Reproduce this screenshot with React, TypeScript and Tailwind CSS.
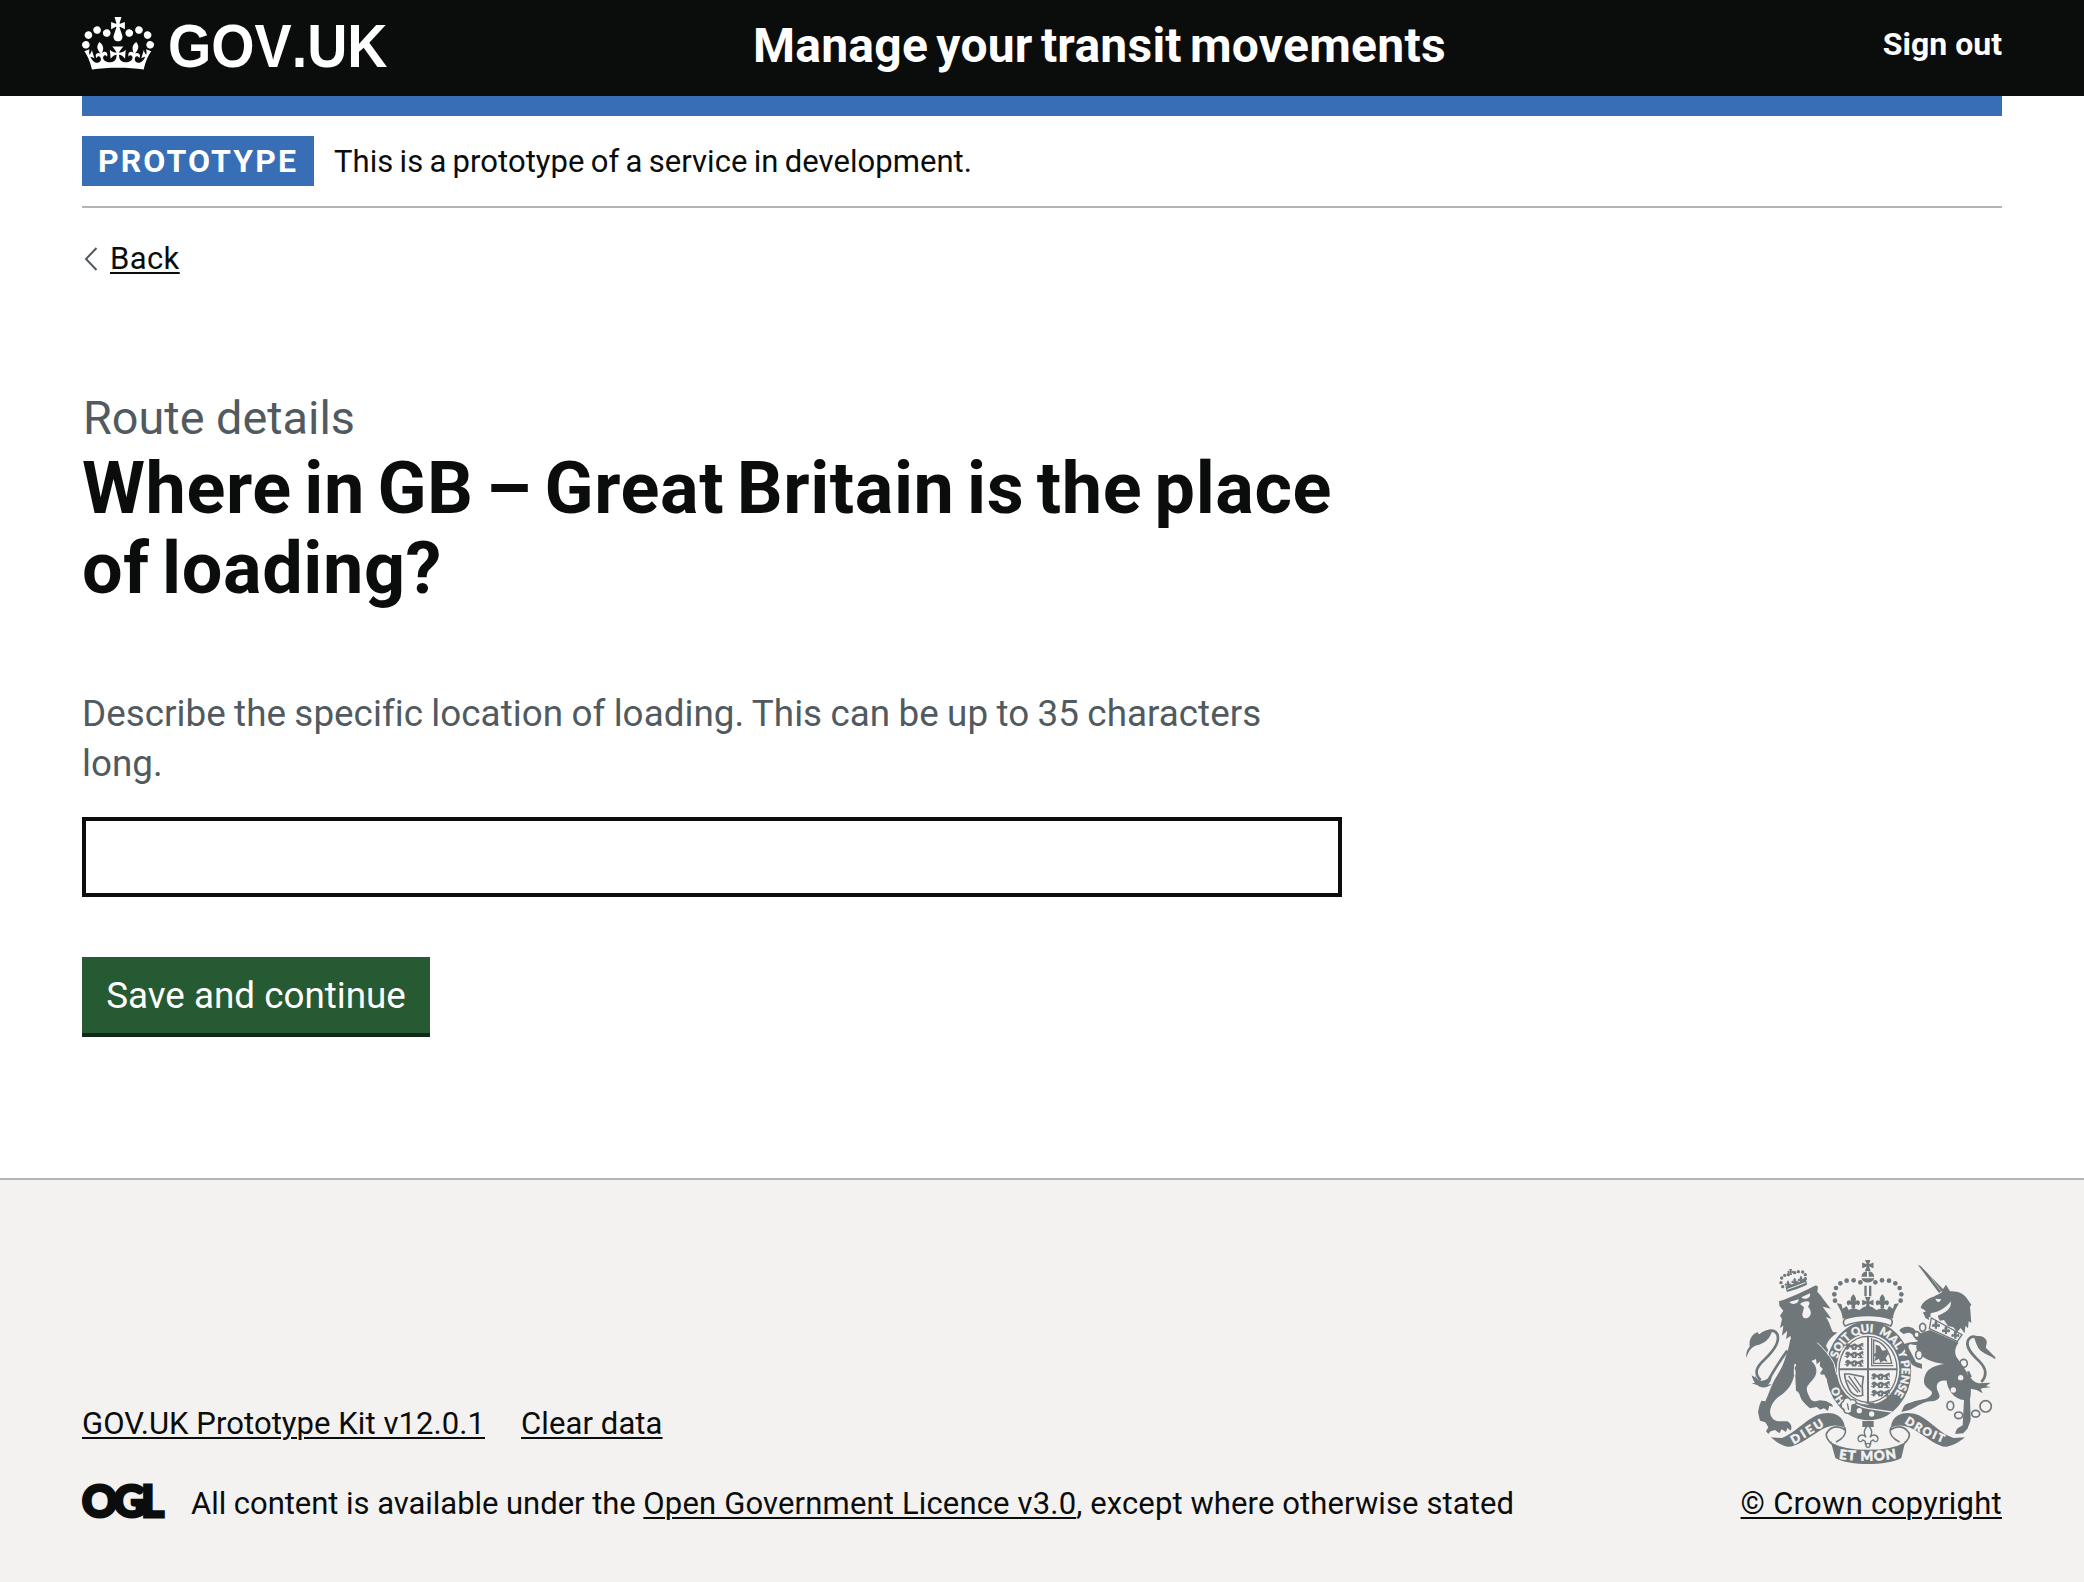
import React from "react";

const INK = "#6f777b";
const PAPER = "#f3f2f1";

function Crown() {
  return (
    <svg viewBox="0 0 132 97" className="h-[53px] w-[72px] shrink-0" fill="currentColor" aria-hidden="true">
      <path d="M25 30.2c3.5 1.5 7.7-.2 9.1-3.7 1.5-3.6-.2-7.8-3.9-9.2-3.6-1.4-7.6.3-9.1 3.9-1.4 3.5.3 7.5 3.9 9zM9 39.5c3.6 1.5 7.8-.2 9.2-3.7 1.5-3.6-.2-7.8-3.9-9.1-3.6-1.5-7.6.2-9.1 3.8-1.4 3.5.3 7.5 3.8 9zM4.4 57.2c3.5 1.5 7.7-.2 9.1-3.8 1.5-3.6-.2-7.7-3.9-9.1-3.5-1.5-7.6.3-9.1 3.8-1.4 3.5.3 7.6 3.9 9.1zm38.3-21.4c3.5 1.5 7.7-.2 9.1-3.8 1.5-3.6-.2-7.7-3.9-9.1-3.6-1.5-7.6.3-9.1 3.8-1.3 3.6.4 7.7 3.9 9.1zm64.4-5.6c-3.6 1.5-7.8-.2-9.1-3.7-1.5-3.6.2-7.8 3.8-9.2 3.6-1.4 7.7.3 9.2 3.9 1.3 3.5-.4 7.5-3.9 9zm15.9 9.3c-3.6 1.5-7.7-.2-9.1-3.7-1.5-3.6.2-7.8 3.7-9.1 3.6-1.5 7.7.2 9.2 3.8 1.5 3.5-.3 7.5-3.8 9zm4.7 17.7c-3.6 1.5-7.8-.2-9.2-3.8-1.5-3.6.2-7.7 3.9-9.1 3.6-1.5 7.7.3 9.2 3.8 1.3 3.5-.4 7.6-3.9 9.1zM89.3 35.8c-3.6 1.5-7.8-.2-9.2-3.8-1.4-3.6.2-7.7 3.9-9.1 3.6-1.5 7.7.3 9.2 3.8 1.4 3.6-.3 7.7-3.9 9.1zM69.7 17.7l8.9 4.7V9.3l-8.9 2.8c-.2-.3-.5-.6-.9-.9L72.4 0H59.6l3.5 11.2c-.3.3-.6.5-.9.9l-8.8-2.8v13.1l8.8-4.7c.3.3.6.7.9.9l-5 15.4v.1c-.2.8-.4 1.6-.4 2.4 0 4.1 3.1 7.5 7 8.1h.2c.3 0 .7.1 1 .1.4 0 .7 0 1-.1h.2c4-.6 7.1-4.1 7.1-8.1 0-.8-.1-1.7-.4-2.4V34l-5.1-15.4c.4-.2.7-.6 1-.9zM66 92.8c16.9 0 32.8 1.1 47.1 3.2 4-16.9 8.9-26.7 14-33.5l-9.6-3.4c1 4.9 1.1 7.2 0 10.2-1.5-1.4-3-4.3-4.2-8.7L108.6 76c2.8-2 5-3.2 7.5-3.3-4.4 9.4-10 11.9-13.6 11.2-4.3-.8-6.3-4.6-5.6-7.9 1-4.7 5.7-5.9 8-.5 4.3-8.7-3-11.4-7.6-8.8 7.1-7.2 7.9-13.5 2.1-21.1-8 6.1-8.1 12.3-4.5 20.8-4.7-5.4-12.1-2.5-9.5 6.2 3.4-5.2 7.9-2 7.2 3.1-.6 4.3-6.4 7.8-13.5 7.2-10.3-.9-10.9-8-11.2-13.8 2.5-.5 7.1 1.8 11 7.3L80.2 60c-4.1 4.4-8 5.3-12.3 5.4 1.4-4.4 8-11.6 8-11.6H55.5s6.4 7.2 7.9 11.6c-4.2-.1-8-1-12.3-5.4l1.4 16.4c3.9-5.5 8.5-7.7 10.9-7.3-.3 5.8-.9 12.8-11.1 13.8-7.2.6-12.9-2.9-13.5-7.2-.7-5 3.8-8.3 7.1-3.1 2.7-8.7-4.6-11.6-9.4-6.2 3.7-8.5 3.6-14.7-4.6-20.8-5.8 7.6-5 13.9 2.2 21.1-4.7-2.6-11.9.1-7.7 8.8 2.3-5.5 7.1-4.2 8.1.5.7 3.3-1.3 7.1-5.7 7.9-3.5.7-9-1.8-13.5-11.2 2.5.1 4.7 1.3 7.5 3.3l-4.7-15.4c-1.2 4.4-2.7 7.2-4.3 8.7-1.1-3-.9-5.3 0-10.2l-9.5 3.4c5 6.9 9.9 16.7 14 33.5 14.8-2.1 30.8-3.2 47.7-3.2z" />
    </svg>
  );
}

function CrossPattee({ x, y, s }: { x: number; y: number; s: number }) {
  return (
    <path
      transform={`translate(${x} ${y}) scale(${s})`}
      d="M-5-10H5L2-2 10-5V5L2 2 5 10H-5L-2 2-10 5V-5L-2-2Z"
    />
  );
}

function Fleur({ x, y, s }: { x: number; y: number; s: number }) {
  return (
    <path
      transform={`translate(${x} ${y}) scale(${s})`}
      d="M0-12C5-7 6-3 2 2 5-3 10-3 11 2 11 7 7 8 6 5L3 6V11H-3V6L-6 5C-7 8-11 7-11 2-10-3-5-3-2 2-6-3-5-7 0-12Z"
    />
  );
}

const CROWN_PEARLS: [number, number][] = [
  [405, 182], [403, 163], [408, 144], [421, 130], [440, 122], [461, 121], [481, 127],
];

/* Three passant lions, shown as rows of broken wavy strokes. */
function LionRows({ x, y }: { x: number; y: number }) {
  return (
    <g transform={`translate(${x} ${y})`} fill="none" stroke={INK} strokeWidth="7" strokeLinecap="round">
      {[0, 25, 50].map((dy) => (
        <g key={dy} transform={`translate(0 ${dy})`}>
          <path d="M4 4q5-6 9 0t10 1 10-1 10 1 9-5M10 5l-3 9M20 6l4 8M34 5l-3 9M44 5l4 9" />
          <path strokeWidth="3" d="M0 12h12M22 15h10M40 16h14M52 0l2 8" />
        </g>
      ))}
    </g>
  );
}

function RoyalArms({ className }: { className: string }) {
  return (
    <svg viewBox="138 60 750 612" className={className} fill={INK} role="img" aria-label="Royal coat of arms">
      {/* crown above the shield */}
      <CrossPattee x={503.5} y={76} s={1.7} />
      <path d="M484 110a19 19 0 0 1 17-16v16zM506 94a19 19 0 0 1 17 16h-17zM484 115h39a20 16 0 0 1-39 0z" />
      <path d="M493 137h7v32h-7zM507 137h7v32h-7z" />
      {CROWN_PEARLS.map(([x, y]) => (
        <g key={x}>
          <circle cx={x} cy={y} r="7" />
          <circle cx={1007 - x} cy={y} r="7" />
        </g>
      ))}
      <Fleur x={460} y={184} s={1.8} />
      <Fleur x={547} y={184} s={1.8} />
      <CrossPattee x={503.5} y={188} s={1.7} />
      <path d="M410 190l14 2 4 14 12-8 6 12 14-6 18 6 14-10h23l14 10 18-6 14 6 6-12 12 8 4-14 14-2c-8 14-16 26-18 46-40-10-111-10-151 0-2-20-10-32-18-46z" />

      {/* lion tail and body */}
      <path d="M262 332c-24 32-42 62-58 90M182 420c-20-18-14-38 8-58 30-28 44-50 44-68 0-18-14-26-30-20" fill="none" stroke={INK} strokeWidth="8" />
      <path d="M216 270c-2 26-26 42-46 46-14 4-24 16-31 38-2-18 4-28 10-34-4-24 12-42 26-44-2 4 0 6 4 6 10-8 22-14 37-12zM165 408c6 12 18 18 30 12l20-10c-2 14-6 20-12 24l12-2c-10 12-34 14-42 4l-18-6 10-2c-6-8-8-14-10-22l10 6z" />
      <path d="M237 184c40-12 78-32 111-48l6 4-2 15c14 14 24 32 40 51l-24-6c10 14 20 26 26 37l-16-6c10 14 14 32 20 44l14 3c-18 12-28 24-34 40 8 16 18 32 28 49 6 14 7 26 5 36l-11-6 3 20-13-12-6 14-10-16-12 2 10-16-12-10 2-16-12 10-2-16-14 6c12 10 18 24 14 38-4 16-20 26-27 40-3 10 4 24 12 38 8 6 18 5 27 2l18 2 18 10 3 8-11-4-4 16-12-8-12 4-10-8-20 4c-12-10-28-26-30-38-2-10-8-13-12-15l-3-60c-5 35-17 55-40 72-20 13-33 28-35 53 2 15 10 25 25 27h27c12 6 15 18 10 28l-10-8-4 12-13-8-7 12-13-10-13 4-7 8-7-8 7-12-9-15-16-5-6-25 4-20 6-15 12 2c10-22 16-42 26-62 13-20 28-45 36-75 10-25 12-45 14-60l-14 10 4-25-16 15 4-30-10 7 6-27-6-10 10-15-12-15z" />
      <path d="M268 186l28-8c2 12-18 20-28 8zM304 172l26-12c4 14-14 22-26 12zM300 192c10-8 20-10 28-6 2 6-2 10-4 14 10 10 12 24 2 32-12 8-22-2-18-14l4-16z" fill={PAPER} />
      <path d="M258 308l14-14M286 372c-2 10-2 20-2 32" fill="none" stroke={PAPER} strokeWidth="5" />
      <path d="M300 372c22-6 34 4 34 4s-4 24-34 62c-8-20-10-46-16-52 0-8 8-12 16-14z" />
      {/* lion crown */}
      <path d="M256 140l62-22 3 16c-20 10-40 16-60 22z" />
      {[[248, 140], [243, 128], [245, 114], [254, 106], [316, 116], [316, 104], [308, 96], [295, 95], [284, 98], [265, 104]].map(([x, y]) => (
        <circle key={`${x}-${y}`} cx={x} cy={y} r="5" />
      ))}
      <CrossPattee x={272} y={96} s={0.9} />
      <Fleur x={264} y={132} s={0.9} />
      <Fleur x={284} y={124} s={0.9} />
      <Fleur x={303} y={118} s={0.9} />
      <path d="M262 148l54-20" stroke={PAPER} strokeWidth="3" />
      <path d="M254 164c34-8 66-22 96-36" fill="none" stroke={PAPER} strokeWidth="4" />

      {/* garter and shield */}
      <ellipse cx="506" cy="392" rx="130" ry="151" fill={INK} stroke={PAPER} strokeWidth="5" />
      <ellipse cx="504" cy="388" rx="94" ry="106" fill={PAPER} />
      <ellipse cx="504" cy="388" rx="87" ry="99" fill="none" stroke={INK} strokeWidth="4" />
      <path d="M436 236c40-13 95-13 135 0 8 6 7 14 1 22-40-18-98-18-137 0-7-8-6-16 1-22z" fill={PAPER} stroke={INK} strokeWidth="5" />
      <path d="M501 288h6v200h-6zM416 385h176v6H416z" />
      <LionRows x={435} y={312} />
      <LionRows x={514} y={402} />
      <path d="M515 294v83h65M521 300c26 6 46 28 54 70h-54z" fill="none" stroke={INK} strokeWidth="4" />
      <path d="M527 314l12 4 8 14 12-2 6 12-8 12 6 12-12-4-10 6-4-12-14 8 4-14-8-4 8-8z" />
      <path d="M434 402h14l42 8c-4 20-4 38-2 56-16 6-34-2-42-22-6-14-12-26-12-42z" fill="none" stroke={INK} strokeWidth="5" />
      <path d="M446 408l34 48M442 420l32 38M462 410l22 32" stroke={INK} strokeWidth="4" />
      <defs>
        <path id="garter-left" d="M413 356A98 113 0 0 1 532 281" />
        <path id="garter-right" d="M536 282A98 113 0 0 1 560 485" />
        <path id="garter-low" d="M438 482A98 113 0 0 1 408 400" />
        <path id="scroll-left" d="M282 613Q322 590 386 549" />
        <path id="scroll-mid" d="M416 656Q504 670 594 654" />
        <path id="scroll-right" d="M613 549Q664 584 738 612" />
      </defs>
      <g fill={PAPER} stroke={PAPER} strokeWidth="1" fontFamily="Lato, 'Liberation Sans', sans-serif" fontWeight="900">
        <g fontSize="34">
          <text textLength="144" lengthAdjust="spacing"><textPath href="#garter-left">SOIT QUI</textPath></text>
          <text textLength="214" lengthAdjust="spacing"><textPath href="#garter-right">MAL Y PENSE</textPath></text>
          <text fontSize="32"><textPath href="#garter-low">HO</textPath></text>
        </g>
      </g>
      {/* lion forepaw over the garter */}
      <path d="M350 308c16 14 34 34 46 54 10 16 14 28 14 44l-9-8-2 18-12-12-8 12-8-16-12 2 10-16-10-10 2-14z" />
      <path d="M352 308c18 18 38 38 50 62l8 34" fill="none" stroke={PAPER} strokeWidth="3" />
      {/* buckle and strap */}
      <path d="M442 478c24 30 74 40 128 34l-8 14c-44 20-92 12-122-16z" />
      <path d="M494 488h28l10 12-20-4z" />
      <path d="M458 486c20 14 40 20 64 22l54 8" fill="none" stroke={PAPER} strokeWidth="4" />
      <path d="M430 484c2-12 18-14 22-4 10-4 20 4 16 12l-12 4-2 20c-8 8-24 4-22-8-8-2-14-18-2-24z" fill={PAPER} stroke={INK} strokeWidth="4" />
      <path d="M442 490l4 20" stroke={INK} strokeWidth="4" />
      <circle cx="478" cy="512" r="8" fill={PAPER} />
      <circle cx="515" cy="522" r="8" fill={PAPER} />

      {/* unicorn */}
      <path d="M654 75l7 2 70 72-14 10z" />
      <path d="M668 76l54 76" stroke={PAPER} strokeWidth="1.5" />
      <path d="M724 158c2-8 10-18 14-24l12 20c24-2 44 8 54 26l10 14-4 6c2 16 2 28 4 48l-8-4-2 20-8-6-2 22-12-16-10 12-12-14-16-4-12-18-12 2c-8-10-8-20 0-28-8 4-20 6-28 8l4 8-10 2 2 8-12-6c-2-10-6-14-8-16l10-4-8-6-8-4c4-18 20-28 38-34z" />
      <path d="M706 176l18 2-6 8c-6 0-10-4-12-10zM752 184c4 20-14 34-36 42l-14 8c-2 8-2 16 2 24l-14-10 2-28c26-4 48-18 60-36z" fill={PAPER} />
      <path d="M694 234l-6 32 84 38 14-20z" fill={PAPER} stroke={INK} strokeWidth="4" />
      <Fleur x={708} y={254} s={1.1} />
      <Fleur x={738} y={270} s={1.1} />
      <Fleur x={766} y={284} s={1.1} />
      <path d="M690 270l86 38c-10 12-14 28-6 44 14 20 30 40 38 62 6 20 6 46 2 64l2 60c-2 14-8 20-8 26l-14 16-24 2c0-8 4-14 8-18l14-8 4-76c-28-2-50-30-52-58-24-4-34 10-28 28l6 14c4 12-10 20-28 20-26 2-46 22-62 26l-24 6 8-18c10-10 20-8 30-14 18-6 40-4 52-20 8-10-10-16-14-22-10-10-10-24-4-38 8-20 32-28 56-32-34-4-66-14-82-44-4-12 6-28 4-46z" />
      <path d="M678 298l-30 2c-6-14-14-22-24-22l-14 4-12-10c8-14 28-14 44-6l12 16 20 6M674 318l-36-4c-10-2-14-2-12 10l22 42 18 6v14l-16-4-14-8c-10-20-22-40-26-60 10-8 50-12 70-6z" />
      <circle cx="782" cy="413" r="8" fill={PAPER} />
      <circle cx="760" cy="450" r="8" fill={PAPER} />
      <g fill={PAPER} stroke={INK} strokeWidth="5">
        <ellipse cx="668" cy="262" rx="9" ry="12" />
        <ellipse cx="650" cy="284" rx="8" ry="9" />
        <ellipse cx="657" cy="344" rx="10" ry="13" />
      </g>
      <g fill="none" stroke={INK} strokeWidth="5">
        <ellipse cx="791" cy="370" rx="11" ry="12" />
        <ellipse cx="751" cy="497" rx="10" ry="13" />
        <ellipse cx="776" cy="526" rx="12" ry="10" />
        <ellipse cx="827" cy="521" rx="12" ry="10" />
        <circle cx="857" cy="499" r="17" />
      </g>
      {/* unicorn tail */}
      <path d="M812 412c-4-8-6-12-8-18M844 426c18-20 14-42-6-62-28-26-44-48-32-66 6-10 18-10 30-4" fill="none" stroke={INK} strokeWidth="8" />
      <path d="M822 292c14-8 32-4 38 10 2 10-4 16-2 22l28 28v6c-14-10-28-14-42-24-12-10-16-26-22-42zM804 400c8 18 20 28 32 30l36-2-14 10 14 4-22 2-8 2 6 14-18-10-18-4-10-22z" />

      {/* pendant fleur-de-lis */}
      <path d="M487 543h34v18h-34z" />
      <path d="M504 556c16 16 12 26 6 36 6-10 22-10 24 4 0 10-10 12-14 4l-8 4v8h-16v-8l-8-4c-4 8-14 6-14-4 2-14 18-14 24-4-6-10-10-20 6-36z" fill={PAPER} stroke={INK} strokeWidth="4" />
      <circle cx="504" cy="616" r="6" fill={PAPER} stroke={INK} strokeWidth="4" />

      {/* motto scrolls */}
      <path d="M212 592l34 2c40-16 66-50 104-68 34-14 72-8 82 24l3 14c-30-14-50-6-76 8-38 24-72 50-96 48-22-4-30-12-51-28z" />
      <path d="M795 592l-34 2c-40-12-66-48-104-68-34-14-72-8-82 24l-3 14c30-14 50-6 76 8 38 24 68 50 92 48 22-4 34-12 55-28z" />
      <path d="M434 562c8 18-6 34-26 44M380 580c10-20 34-26 56-10M380 578c-6 14 6 26 18 36M573 562c-8 18 6 34 26 44M627 580c-10-20-34-26-56-10M627 578c6 14-6 26-18 36" fill="none" stroke={INK} strokeWidth="5" />
      <path d="M392 604c50 30 172 30 224 0l-12 50c-44 24-156 24-198 0z" />
      <path d="M396 606c50 28 166 28 216 0" fill="none" stroke={PAPER} strokeWidth="5" />
      <g fill={PAPER} stroke={PAPER} strokeWidth="1.5" fontFamily="Lato, 'Liberation Sans', sans-serif" fontWeight="900">
        <text fontSize="36" textLength="108" lengthAdjust="spacing"><textPath href="#scroll-left">DIEU</textPath></text>
        <text fontSize="40" textLength="174" lengthAdjust="spacing"><textPath href="#scroll-mid">ET MON</textPath></text>
        <text fontSize="34" textLength="130" lengthAdjust="spacing"><textPath href="#scroll-right">DROIT</textPath></text>
      </g>
    </svg>
  );
}

const link = "underline decoration-2 underline-offset-[3px]";

export default function App() {
  return (
    <div className="flex h-[1582px] flex-col bg-white font-['Roboto',sans-serif] text-[#0b0c0c]">
      <header className="h-24 bg-[#0b0c0c] px-[82px] text-white">
        <div className="flex h-full">
          <a className="flex w-[671px] pt-[17px]">
            <Crown />
            <span className="mt-[-4px] ml-[14px] origin-left scale-x-[0.92] font-['Liberation_Sans',sans-serif] text-[60.5px] leading-[66px] font-bold [font-kerning:none]">
              GOV.UK
            </span>
          </a>
          <a className="flex-1 pt-[16px] text-[48px] leading-[60px] font-bold tracking-[0.25px] [word-spacing:-4px]">
            Manage your transit movements
          </a>
          <a className="pt-[24px] text-[32px] leading-[40px] font-bold">Sign out</a>
        </div>
      </header>

      <main className="mx-[82px] flex h-[1082px] flex-col">
        <div className="h-5 shrink-0 bg-[#386eb5]" />
        <div className="flex h-[92px] shrink-0 items-center border-b-2 border-[#b1b4b6]">
          <strong className="flex h-[50px] w-[232px] items-center bg-[#386eb5] pl-4 text-[32px] leading-[50px] font-bold tracking-[2.1px] text-white">
            PROTOTYPE
          </strong>
          <span className="ml-5 pt-[2px] text-[31px] leading-[48px] tracking-[0.05px] [word-spacing:-1.5px]">
            This is a prototype of a service in development.
          </span>
        </div>

        <a className="mt-[31px] flex h-10 shrink-0 items-center text-[31px] leading-10 tracking-[0.4px]">
          <svg viewBox="0 0 14 24" className="mr-[12px] ml-[2px] h-6 w-[14px]" fill="none" stroke="#505a5f" strokeWidth="2" aria-hidden="true">
            <path d="M12.5 1 2 12l10.5 11" />
          </svg>
          <span className={link}>Back</span>
        </a>

        <div className="w-[1260px] pt-[109px]">
          <h1>
            <span className="ml-px block text-[46.8px] leading-[60px] text-[#505a5f]">Route details</span>
            <span className="block pt-px text-[72px] leading-[80px] font-bold tracking-[0.6px] [word-spacing:-6px]">
              Where in GB – Great Britain is the place of loading?
            </span>
          </h1>
          <p className="mt-20 text-[36.8px] leading-[50px] tracking-[0.03px] text-[#505a5f] [word-spacing:-0.8px]">
            Describe the specific location of loading. This can be up to 35 characters long.
          </p>
          <input type="text" aria-label="Place of loading" className="mt-[28px] block h-20 w-full border-4 border-[#0b0c0c] bg-white" />
          <button className="mt-[60px] flex h-20 w-[348px] justify-center border-b-4 border-[#10291a] bg-[#265a33] pt-[14px] text-[36.8px] leading-[50px] text-white">
            Save and continue
          </button>
        </div>
      </main>

      <footer className="flex h-[404px] items-end justify-between border-t-2 border-[#b1b4b6] bg-[#f3f2f1] px-[82px] pb-[58px] text-[31px] leading-10">
        <div>
          <div className="flex gap-[36px]">
            <a className={`${link} tracking-[0.07px]`}>GOV.UK Prototype Kit v12.0.1</a>
            <a className={`${link} tracking-[0.1px]`}>Clear data</a>
          </div>
          <div className="mt-10 flex">
            <svg viewBox="0 0 82 34" className="mr-[27px] h-[34px] w-[82px] overflow-visible" fill="#0b0c0c" role="img" aria-label="OGL">
              <text x="0" y="32.5" fontFamily="Lato, sans-serif" fontWeight="900" fontSize="43.5" stroke="#0b0c0c" strokeWidth="3" textLength="82" lengthAdjust="spacing">
                OGL
              </text>
            </svg>
            <span>
              <span className="tracking-[-0.04px]">All content is available under the </span>
              <a className={`${link} tracking-[0.16px]`}>Open Government Licence v3.0</a>
              <span className="tracking-[0.11px]">, except where otherwise stated</span>
            </span>
          </div>
        </div>
        <a className="flex flex-col items-center gap-5">
          <RoyalArms className="h-[204px] w-[250px]" />
          <span className={`${link} tracking-[0.28px]`}>© Crown copyright</span>
        </a>
      </footer>
    </div>
  );
}
